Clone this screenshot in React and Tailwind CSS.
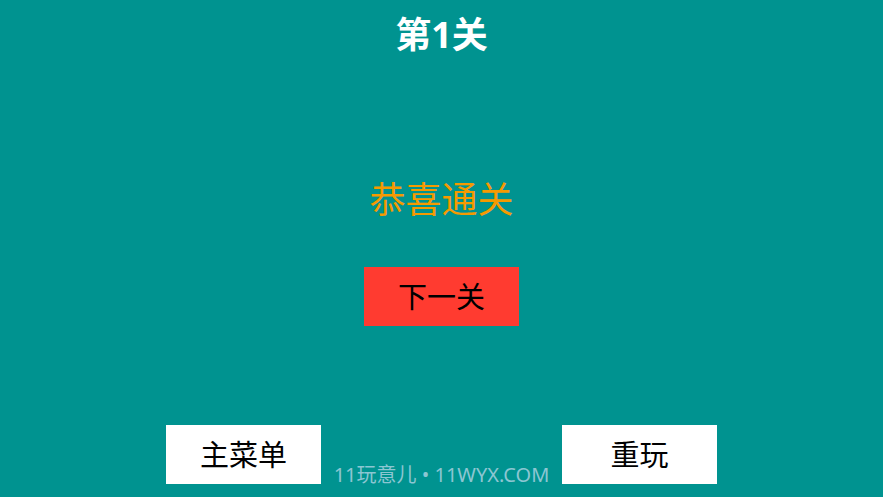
import React from "react";

const cjk = { fontFamily: '"Noto Sans", "Noto Sans CJK SC", sans-serif' };

export default function App() {
  return (
    <div
      className="relative flex h-[497px] w-full flex-col items-center overflow-hidden bg-[#009390]"
      style={cjk}
    >
      <div className="flex h-[70px] items-center justify-center text-[36px] font-bold text-white">
        第1关
      </div>
      <div className="mt-[110px] flex h-[40px] items-center justify-center text-[36px] text-[#f59a00]">
        恭喜通关
      </div>
      <button className="mt-[47px] flex h-[59px] w-[155px] items-center justify-center bg-[#ff3b30] text-[29px] text-black">
        下一关
      </button>
      <div className="mt-[99px] flex gap-[241px]">
        <button className="flex h-[59px] w-[155px] items-center justify-center bg-white text-[29px] text-black">
          主菜单
        </button>
        <button className="flex h-[59px] w-[155px] items-center justify-center bg-white text-[29px] text-black">
          重玩
        </button>
      </div>
      <div className="absolute bottom-[10px] left-0 right-0 text-center text-[20px] leading-[24px] text-[#8cc6d2]">
        11玩意儿 • 11WYX.COM
      </div>
    </div>
  );
}
